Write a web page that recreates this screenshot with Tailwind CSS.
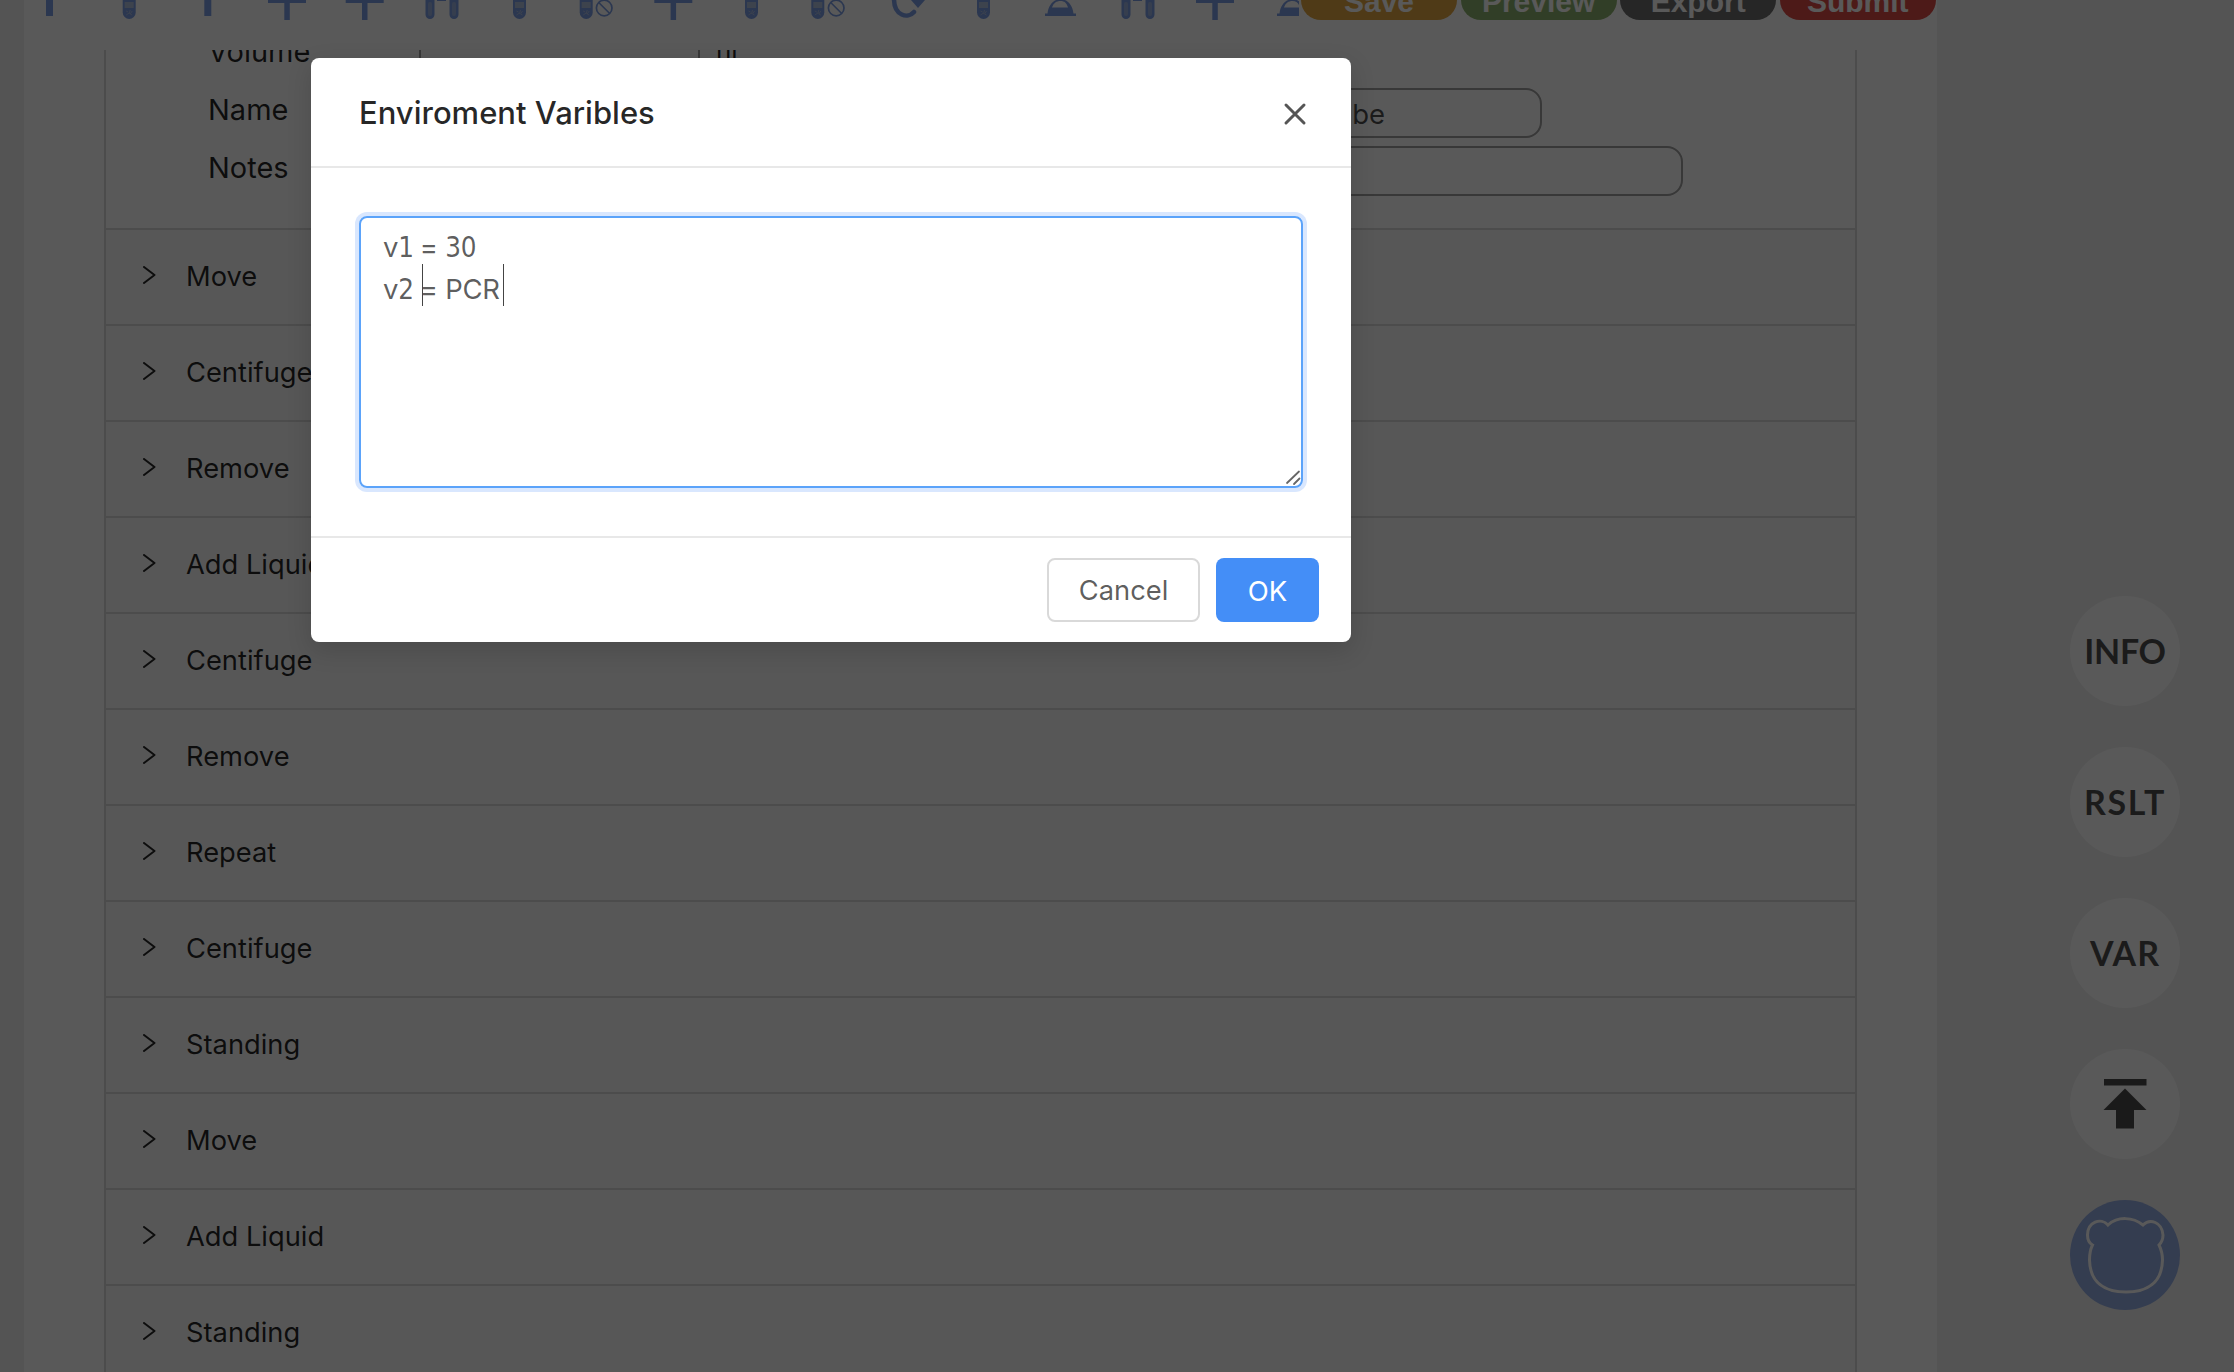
<!DOCTYPE html>
<html lang="en">
<head>
<meta charset="utf-8">
<title>Protocol Editor</title>
<script src="https://cdn.jsdelivr.net/npm/@tailwindcss/browser@4"></script>
</head>
<body class="relative h-[1372px] w-[2234px] overflow-hidden bg-[#f0f0f0] font-['Inter',sans-serif] text-[27.5px] text-black/85">
<svg class="hidden">
  <defs>
    <g id="tube"><path d="M-6.5-10V12.5a6.5 6.5 0 0 0 13 0V-10z" fill="#7d9ee4"/><path d="M-4.5-6h9v6h-9zM-4.5 2h9v6h-9z" fill="#b0c0dc"/><path d="M-3 11l2 1M1 10l-1 4M-3 15l3-2M3 11l-2 3M3 15l-2-1" stroke="#a9bbe0" stroke-width="1" fill="none"/></g>
    <g id="plus"><path d="M-19-2.500h38v5.500h-38z"/><path d="M-2.700-20h5.500v40h-5.500z"/></g>
    <g id="pair"><path d="M-16.500-10h9V14.500a4.500 4.500 0 0 1-9 0zM7.500-10h9V14.500a4.500 4.500 0 0 1-9 0z"/><path d="M-12 4v10M12 4v10" stroke="#9cb2de" stroke-width="4" stroke-linecap="round"/><path d="M-5 0h9" stroke="#7d9ee4" stroke-width="2"/></g>
    <g id="ban" fill="none" stroke="#7d9ee4" stroke-width="1.700"><circle r="7.800"/><path d="M-5.500-5.500l11 11"/></g>
    <g id="cloche"><path d="M-13 13.500C-12 5-7-.8 0-.8S12 5 13 13.500h2.500v2.500h-31v-2.500z"/><path d="M-8.500 7.500C-7 3-4 1-0 1S6 3 7.500 7.500z" fill="#fff"/></g>
  </defs>
</svg>

<div class="ml-6 flex h-full w-[1913px] flex-col bg-white">
  <header class="flex h-[50px] shrink-0 items-start">
    <div id="tools" class="flex w-[1275px] shrink-0 overflow-hidden pl-[31px]"></div>
    <div class="-mt-5 ml-[2px] flex gap-[3.6px] font-['Liberation_Sans',sans-serif] text-[30px] font-bold text-white">
      <button class="h-10 w-[156px] rounded-[20px] bg-[#e2a642] pt-[3px] leading-9">Save</button>
      <button class="h-10 w-[156px] rounded-[20px] bg-[#8eb36f] pt-[3px] leading-9">Preview</button>
      <button class="h-10 w-[156px] rounded-[20px] bg-[#6d6d6d] pt-[3px] leading-9">Export</button>
      <button class="h-10 w-[156px] rounded-[20px] bg-[#dc4c46] pt-[3px] leading-9">Submit</button>
    </div>
  </header>

  <main class="ml-20 w-[1753px] flex-1 overflow-hidden border-x-2 border-[#d9d9d9]">
    <section class="flex h-[178px] flex-col justify-end overflow-hidden pb-7 pl-[102px] text-[29px]">
      <div class="flex h-[58px] shrink-0 items-center">
        <div class="w-[211px] pb-[7px]">Volume</div>
        <div class="h-[50px] w-[281px] border-x-2 border-[#a0a0a0]"></div>
        <div class="pb-[3px] pl-4 text-[26px]">ul</div>
      </div>
      <div class="flex h-[58px] shrink-0 items-center">
        <div class="w-[992px] pb-[7px]">Name</div>
        <div class="flex h-[50px] w-[342px] items-center rounded-2xl border-2 border-[#a0a0a0] pl-[125px] pt-[3px] text-[27.5px] text-black/70">tube</div>
      </div>
      <div class="flex h-[58px] shrink-0 items-center">
        <div class="w-[992px] pb-[7px]">Notes</div>
        <div class="h-[50px] w-[483px] rounded-2xl border-2 border-[#a0a0a0]"></div>
      </div>
    </section>
    <div id="steps"></div>
  </main>
</div>

<aside class="absolute left-[2070px] top-[596px] flex flex-col gap-[41px] font-['Lato',sans-serif] text-[34px] font-bold text-black/70">
  <div class="flex size-[110px] items-center justify-center rounded-full bg-white pb-[2px] tracking-[-0.3px]">INFO</div>
  <div class="flex size-[110px] items-center justify-center rounded-full bg-white pb-[2px] tracking-[1.6px]">RSLT</div>
  <div class="flex size-[110px] items-center justify-center rounded-full bg-white pb-[2px] tracking-[1px]">VAR</div>
  <div class="size-[110px] rounded-full bg-white">
    <svg viewBox="0 0 110 110" class="size-full" fill="#4b4b4b"><path d="M34 30h42.500v6.500H34zM55 39.500 76.500 61H64v18.500H46V61H33.500z"/></svg>
  </div>
  <div class="size-[110px] rounded-full bg-[#95aee4]">
    <svg viewBox="0 0 110 110" class="size-full" fill="none" stroke="#fff" stroke-width="3"><path d="M38 25C31 17 17.500 22 17.500 35C17.500 39 19 43 22.500 45C20 50 19.500 55 19.500 60C20 83 35 92 56 92S92 83 92.500 60C92.500 54 91 49 89 45C91 43 93 40 93 35C92 22 80 18 73 25C63 17 48 16 38 25Z"/></svg>
  </div>
</aside>

<div class="absolute inset-0 bg-black/65"></div>

<div class="absolute left-[311px] top-[58px] flex h-[584px] w-[1040px] flex-col rounded-lg bg-white shadow-[0_8px_24px_rgba(0,0,0,0.15)]">
  <div class="flex h-[110px] items-center justify-between border-b-2 border-[#e8e8e8] pl-12 pr-11">
    <h2 class="pt-[2px] text-[31px] font-medium text-black/85">Enviroment Varibles</h2>
    <svg class="mt-[3px] size-6" viewBox="0 0 24 24" fill="none" stroke="#555" stroke-width="3" stroke-linecap="round"><path d="M3 3l18 18M21 3L3 21"/></svg>
  </div>
  <div class="flex-1 px-12 pt-12">
    <div class="relative h-[272px] w-[944px] rounded-lg border-2 border-[#5ba3fa] px-[22px] pt-2 leading-[42px] tracking-[-0.25px] text-black/65 shadow-[0_0_0_4px_#d9e7fe]">
      <div>v<span class="font-['DejaVu_Sans_Condensed','DejaVu_Sans',sans-serif]">1</span><span class="-ml-[1.5px]"> =</span> <span class="font-['DejaVu_Sans_Condensed','DejaVu_Sans',sans-serif]">30</span></div>
      <div>v<span class="font-['DejaVu_Sans_Condensed','DejaVu_Sans',sans-serif]">2</span><span class="-ml-[1.5px]"> =</span> PCR</div>
      <i class="absolute left-[61px] top-[46px] h-[42px] w-px bg-[#444]"></i>
      <i class="absolute left-[142px] top-[46px] h-[42px] w-px bg-[#444]"></i>
      <svg class="absolute bottom-0 right-0 size-4" viewBox="0 0 16 16" fill="none" stroke="#666" stroke-width="1.800" stroke-linecap="round"><path d="M2 13L14 1.500M9 14l5.500-5.500"/></svg>
    </div>
  </div>
  <div class="flex h-[106px] items-center justify-end gap-4 border-t-2 border-[#e8e8e8] pr-8">
    <button class="h-16 w-[153px] rounded-lg border-2 border-[#d9d9d9] pt-[3px] text-[27.3px] text-black/65">Cancel</button>
    <button class="h-16 w-[103px] rounded-lg bg-[#448ef7] pt-[3px] text-white">OK</button>
  </div>
</div>

<script>
  const use = (id, x, y = 0) => `<use href="#${id}" x="${x}" y="${y}"/>`;
  const bar = x => `<path d="M${x}-10h7v26h-7z"/>`;
  const rotate = '<path d="M-12-1C-12 16 2 19 8 12" fill="none" stroke="#7d9ee4" stroke-width="4.500" stroke-linecap="round"/><path d="M5 0h14l-7 8z"/>';
  const tools = [bar(-9), use('tube', -2.8), bar(-5.7), use('plus', 0), use('plus', 0.7), use('pair', 0), use('tube', 0.5),
    use('tube', -9.8) + use('ban', 8.2, 8), use('plus', -0.7), use('tube', 0.5), use('tube', -10.2) + use('ban', 8.2, 8), rotate,
    use('tube', 0.5), use('cloche', 0.5), use('pair', 0), use('plus', 0), use('cloche', 0.5)];
  document.getElementById('tools').innerHTML = tools.map(t =>
    `<div class="flex w-[77.33px] shrink-0"><svg class="-ml-5 h-5 w-[60px] shrink-0" viewBox="-20 0 60 20" fill="#7d9ee4">${t}</svg></div>`).join('');
  const steps = ['Move', 'Centifuge', 'Remove', 'Add Liquid', 'Centifuge', 'Remove', 'Repeat', 'Centifuge', 'Standing', 'Move', 'Add Liquid', 'Standing'];
  document.getElementById('steps').innerHTML = steps.map(s =>
    `<div class="flex h-24 items-center border-t-2 border-[#d9d9d9] bg-[#fafafa] pl-[35px]">
      <svg class="-mt-[5px] size-[18px]" viewBox="0 0 18 18" fill="none" stroke="#262626" stroke-width="2" stroke-linecap="round" stroke-linejoin="round"><path d="M3 1l10.500 8L3 17"/></svg>
      <span class="ml-[27px] text-[27.3px]">${s}</span></div>`).join('');
</script>
</body>
</html>
